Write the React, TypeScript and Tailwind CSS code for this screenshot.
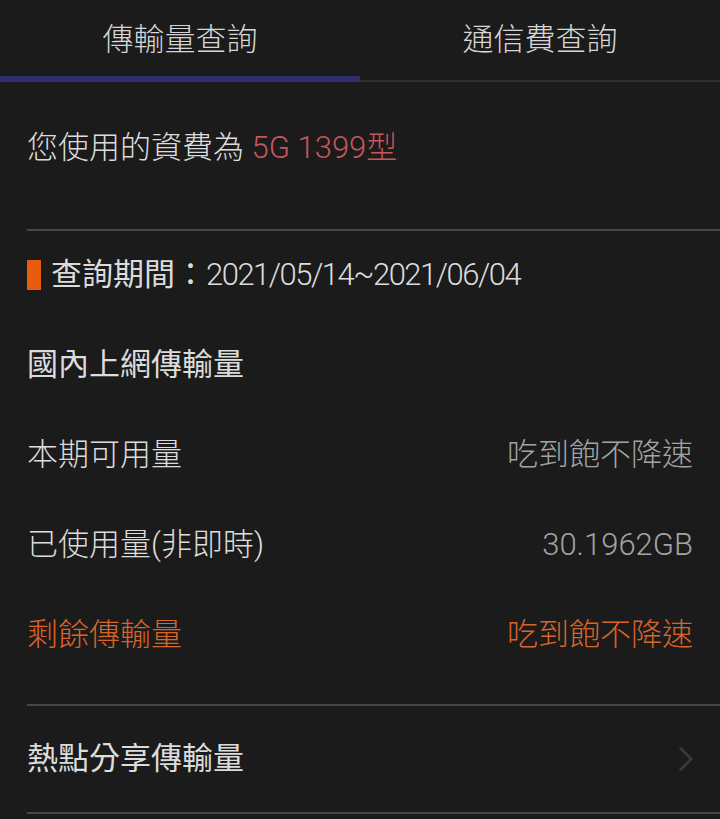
import { ChevronRight } from 'lucide-react'

const font = { fontFamily: 'Roboto, "Noto Sans CJK TC", sans-serif' }

const usageRows = [
  { label: '本期可用量', value: '吃到飽不降速', highlight: false },
  { label: '已使用量(非即時)', value: '30.1962GB', highlight: false },
  { label: '剩餘傳輸量', value: '吃到飽不降速', highlight: true },
]

export default function App() {
  return (
    <div className="min-h-[819px] w-[720px] overflow-hidden bg-[#1b1b1b] font-light text-[31px] leading-10 text-[#dcdcdc]" style={font}>
      {/* Tabs */}
      <div className="flex items-end">
        <button className="flex h-[82px] flex-1 items-center justify-center border-b-[6px] border-[#2c2f6b] pt-[4px] text-[#d6d6d6]">
          傳輸量查詢
        </button>
        <button className="flex h-[82px] flex-1 items-center justify-center border-b-2 border-[#303030] text-[#d6d6d6]">
          通信費查詢
        </button>
      </div>

      <div className="pl-[27px]">
        <div className="border-b-2 border-[#474747] pt-[46px] pb-[61px]">
          您使用的資費為 <span className="text-[#c4575b]">5G 1399型</span>
        </div>

        <div className="flex flex-col gap-[50px] pt-[24px] pr-[27px]">
          <div className="flex items-center">
            <span className="mr-[10px] h-[30px] w-[14px] bg-[#e85c0d]" />
            <span className="font-normal">查詢期間：</span>
            <span className="tracking-[-1.5px]">2021/05/14~2021/06/04</span>
          </div>
          <div className="font-normal">國內上網傳輸量</div>
          {usageRows.map((row) => (
            <div key={row.label} className={`flex items-center justify-between ${row.highlight ? 'text-[#d9642a]' : ''}`}>
              <span>{row.label}</span>
              <span className={row.highlight ? '' : 'text-[#a3a3a3]'}>{row.value}</span>
            </div>
          ))}
        </div>

        <div className="mt-[49px] flex h-[110px] items-center justify-between border-y-2 border-[#474747] pr-[13px]">
          <span className="font-normal">熱點分享傳輸量</span>
          <ChevronRight className="h-[42px] w-[42px] text-[#393939]" strokeWidth={1.7} />
        </div>
      </div>
    </div>
  )
}
